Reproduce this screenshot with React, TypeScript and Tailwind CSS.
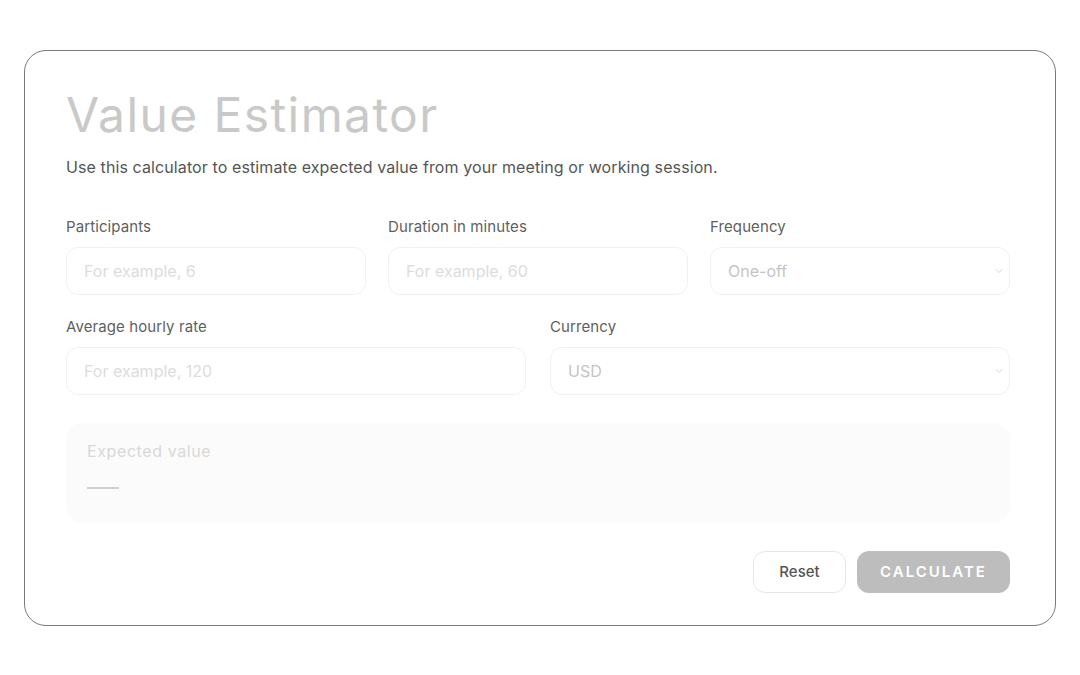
import { ChevronDown } from 'lucide-react';

function Field({ label, placeholder }: { label: string; placeholder: string }) {
  return (
    <div className="flex flex-col">
      <label className="text-[15px] leading-5 text-[#5f5f5f] mb-[10px] tracking-[0.1px]">{label}</label>
      <div className="h-12 rounded-xl border border-[#f1f1f1] bg-white px-[17px] flex items-center text-[16px] text-[#dcdcdc]">
        {placeholder}
      </div>
    </div>
  );
}

function SelectField({ label, value }: { label: string; value: string }) {
  return (
    <div className="flex flex-col">
      <label className="text-[15px] leading-5 text-[#5f5f5f] mb-[10px] tracking-[0.1px]">{label}</label>
      <div className="h-12 rounded-xl border border-[#f1f1f1] bg-white pl-[17px] pr-[4px] flex items-center justify-between text-[16px] text-[#c4c4c4]">
        <span>{value}</span>
        <ChevronDown size={12} strokeWidth={1.5} className="text-[#c8c8c8]" />
      </div>
    </div>
  );
}

export default function App() {
  return (
    <div className="min-h-screen bg-white pt-[50px] px-[24px]" style={{ fontFamily: 'Inter, "Noto Sans", sans-serif' }}>
      <div className="h-[576px] rounded-[22px] border border-[#7a7a7a] pl-[41px] pt-[34px]">
        <div className="w-[944px]">
          <h1 className="text-[48px] leading-[60px] text-[#c9c9c9] tracking-[1.4px]">Value Estimator</h1>
          <p className="mt-[10px] text-[16px] leading-6 text-[#555] tracking-[0.1px]">
            Use this calculator to estimate expected value from your meeting or working session.
          </p>

          <div className="mt-[38px] grid grid-cols-3 gap-x-[22px]">
            <Field label="Participants" placeholder="For example, 6" />
            <Field label="Duration in minutes" placeholder="For example, 60" />
            <SelectField label="Frequency" value="One-off" />
          </div>

          <div className="mt-[22px] grid grid-cols-2 gap-x-[24px]">
            <Field label="Average hourly rate" placeholder="For example, 120" />
            <SelectField label="Currency" value="USD" />
          </div>

          <div className="mt-[28px] h-[100px] rounded-2xl bg-[#fbfbfb] px-[21px] pt-[18px]">
            <div className="text-[16px] leading-5 tracking-[0.6px] text-[#d8d8d8]">Expected value</div>
            <div className="mt-[26px] w-[32px] h-[2px] bg-[#cfcfcf]" />
          </div>

          <div className="mt-[28px] flex justify-end gap-[11px]">
            <button className="h-[42px] w-[93px] rounded-xl border border-[#e6e6e6] bg-white text-[15px] font-medium text-[#555]">
              Reset
            </button>
            <button className="h-[42px] w-[153px] rounded-xl bg-[#bdbdbd] text-[15px] font-semibold tracking-[2px] text-white">
              CALCULATE
            </button>
          </div>
        </div>
      </div>
    </div>
  );
}
